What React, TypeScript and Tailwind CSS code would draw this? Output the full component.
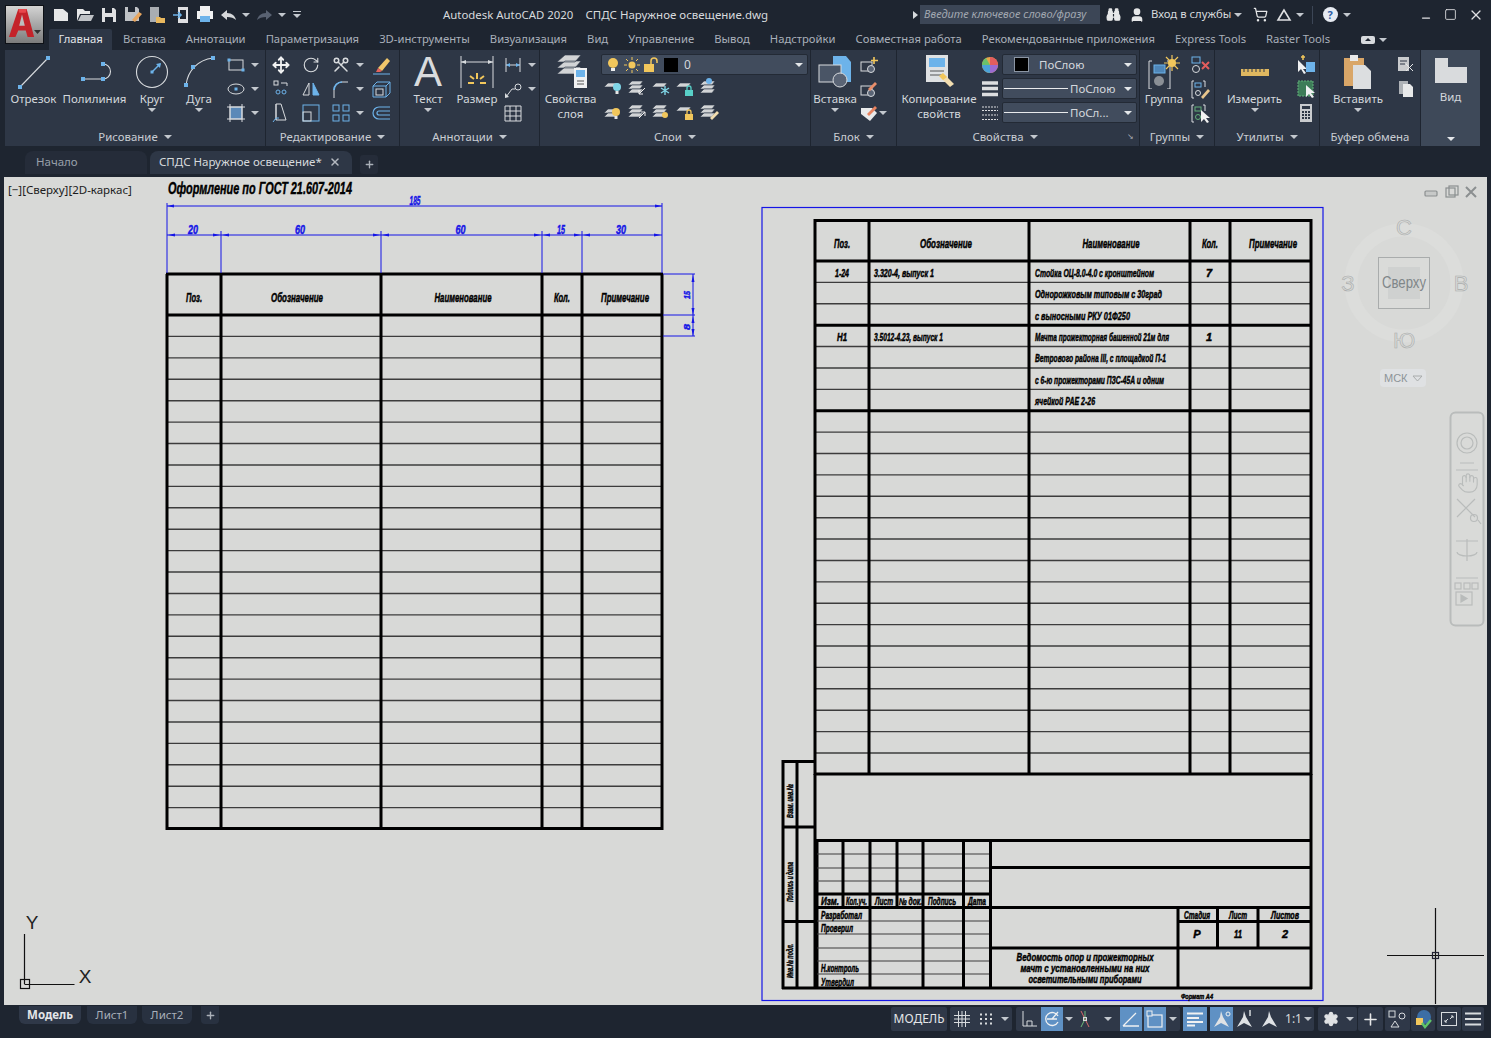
import type { ReactNode } from 'react'
import { Move, RotateCw, Scissors, ShoppingCart, Binoculars, User, Settings, Plus, X, Minus, Square, Hand } from 'lucide-react'

const L = '#d8dbde'
const B = '#6db3ea'
const Y = '#f2c75c'
const G = '#63b07a'
const CAD = '#1515e6'

function Ic({ w = 22, h = 22, children }: { w?: number; h?: number; children: ReactNode }) {
  return (
    <svg width={w} height={h} viewBox={`0 0 ${w} ${h}`} fill="none" className="block shrink-0">
      {children}
    </svg>
  )
}

function Caret({ light }: { light?: boolean }) {
  return (
    <svg width="8" height="4" viewBox="0 0 8 4" className="block shrink-0">
      <path d="M0 0h8L4 4z" fill={light ? '#e4e7ea' : '#c3c8ce'} />
    </svg>
  )
}

function Dot({ x, y, s = 4, c = B }: { x: number; y: number; s?: number; c?: string }) {
  return <rect x={x - s / 2} y={y - s / 2} width={s} height={s} fill={c} />
}

function Big({
  cls,
  icon,
  label,
  label2,
  caret,
}: {
  cls: string
  icon: ReactNode
  label: string
  label2?: string
  caret?: boolean
}) {
  return (
    <div className={`flex shrink-0 flex-col items-center ${cls}`}>
      <div className="flex h-[38px] items-center justify-center">{icon}</div>
      <div className="whitespace-nowrap text-center text-[11.5px] leading-[15px] text-[#d3d7dc]">
        {label}
        {label2 ? <div>{label2}</div> : null}
      </div>
      {caret ? (
        <div className="mt-[2px]">
          <Caret />
        </div>
      ) : null}
    </div>
  )
}

function Cell({ box = 'w-[30px]', icon, caret }: { box?: string; icon: ReactNode; caret?: boolean }) {
  return (
    <div className="flex h-[24px] items-center">
      <div className={`flex shrink-0 items-center justify-center ${box}`}>{icon}</div>
      {caret ? <Caret /> : null}
    </div>
  )
}

function Panel({
  cls,
  title,
  children,
  launcher,
  noCaret,
}: {
  cls: string
  title: string
  children: ReactNode
  launcher?: boolean
  noCaret?: boolean
}) {
  return (
    <div className={`flex shrink-0 flex-col border-r border-[#1e2530] bg-[#2e3746] ${cls}`}>
      <div className="flex h-[77px] pt-[3px]">{children}</div>
      <div
        className={`relative flex h-[19px] items-center justify-center gap-[6px] text-[11.4px] text-[#c9cdd3] ${launcher ? 'pr-[26px]' : ''}`}
      >
        {title}
        {noCaret ? null : <Caret />}
        {launcher ? (
          <span className="absolute right-[5px] top-[5px] text-[8px] leading-none text-[#aab0b8]">↘</span>
        ) : null}
      </div>
    </div>
  )
}

function Stack({ n = 3, children }: { n?: number; children?: ReactNode }) {
  const ys = n === 3 ? [5, 9, 13] : n === 2 ? [9, 13] : [7]
  return (
    <Ic>
      {ys.map((y) => (
        <path key={y} d={`M6 ${y}h11l-3 4H2z`} fill="#d2d4d6" stroke="#2e3746" strokeWidth="0.6" />
      ))}
      {children}
    </Ic>
  )
}

const bulb = (c: string, x = 14, y = 12) => (
  <g>
    <circle cx={x} cy={y} r="4" fill={c} />
    <rect x={x - 1.5} y={y + 4} width="3" height="3" fill="#e6e6e6" />
  </g>
)

const lock = (c: string, x = 11, y = 11) => (
  <g>
    <rect x={x} y={y + 3} width="8" height="6" fill={c} />
    <path d={`M${x + 2} ${y + 3}v-2a2 2 0 0 1 4 0v2`} stroke={c} strokeWidth="1.3" />
  </g>
)

function Dropdown({ children }: { children: ReactNode }) {
  return (
    <div className="flex h-[21px] w-[135px] items-center rounded-[2px] border border-[#232a35] bg-[#414c5d] pr-[4px] text-[11.5px] text-[#d3d7dc]">
      {children}
      <div className="ml-auto">
        <Caret light />
      </div>
    </div>
  )
}

function Ribbon() {
  return (
    <div className="flex h-[96px] bg-[#1e2530] pl-[5px]">
      <Panel cls="w-[261px]" title="Рисование">
        <Big
          cls="w-[57px]"
          label="Отрезок"
          icon={
            <Ic w={34} h={34}>
              <path d="M3 32L31 3" stroke={L} strokeWidth="1.1" />
              <Dot x={3} y={32} />
              <Dot x={31} y={3} />
            </Ic>
          }
        />
        <Big
          cls="w-[65px]"
          label="Полилиния"
          icon={
            <Ic w={36} h={30}>
              <path d="M6 22h20a7.5 7.5 0 0 0 0-15" stroke={L} strokeWidth="1.1" />
              <Dot x={6} y={22} />
              <Dot x={26} y={22} />
              <Dot x={26} y={7} />
            </Ic>
          }
        />
        <Big
          cls="w-[50px]"
          label="Круг"
          caret
          icon={
            <Ic w={34} h={34}>
              <circle cx="17" cy="17" r="15.5" stroke={L} strokeWidth="1.1" />
              <path d="M17 17l8-8" stroke={B} strokeWidth="1.4" />
              <path d="M26 8l-5 1 4 4z" fill={B} />
              <Dot x={17} y={17} s={3} />
            </Ic>
          }
        />
        <Big
          cls="w-[44px]"
          label="Дуга"
          caret
          icon={
            <Ic w={32} h={34}>
              <path d="M3 30C5 15 15 5 30 3" stroke={L} strokeWidth="1.1" />
              <Dot x={3} y={30} />
              <Dot x={10} y={12} />
              <Dot x={30} y={3} />
            </Ic>
          }
        />
        <div className="flex flex-col">
          <Cell
            caret
            icon={
              <Ic>
                <rect x="4" y="6" width="14" height="10" stroke={L} />
                <Dot x={4} y={6} s={3} />
                <Dot x={18} y={16} s={3} />
              </Ic>
            }
          />
          <Cell
            caret
            icon={
              <Ic>
                <ellipse cx="11" cy="11" rx="8" ry="5" stroke={L} />
                <Dot x={11} y={11} s={3} />
              </Ic>
            }
          />
          <Cell
            caret
            icon={
              <Ic>
                <rect x="5" y="5" width="12" height="12" fill="#5b89b8" stroke={L} />
                <path d="M2 5h18M2 17h18M5 2v18M17 2v18" stroke={L} />
              </Ic>
            }
          />
        </div>
      </Panel>

      <Panel cls="w-[134px]" title="Редактирование">
        <div className="flex flex-col">
          <Cell icon={<Move size={18} color="#f0f1f2" strokeWidth={2.4} />} />
          <Cell
            icon={
              <Ic>
                <circle cx="8" cy="14" r="2" stroke={B} />
                <circle cx="14" cy="14" r="2" stroke={B} />
                <rect x="4" y="3" width="4" height="4" stroke={L} />
                <path d="M11 5h6v3" stroke={L} />
              </Ic>
            }
          />
          <Cell
            icon={
              <Ic>
                <path d="M6 2h5l5 16H6zM6 2v16" stroke={L} fill="none" />
                <path d="M3 20l3-4h3" stroke={B} />
              </Ic>
            }
          />
        </div>
        <div className="flex flex-col">
          <Cell icon={<RotateCw size={18} color={L} strokeWidth={1.5} />} />
          <Cell
            icon={
              <Ic>
                <path d="M9 5v12H3z" stroke={L} />
                <path d="M13 5v12h6z" fill={B} stroke={B} />
              </Ic>
            }
          />
          <Cell
            icon={
              <Ic>
                <rect x="3" y="3" width="16" height="16" stroke={B} />
                <rect x="3" y="10" width="8" height="9" stroke={L} />
              </Ic>
            }
          />
        </div>
        <div className="flex w-[40px] flex-col">
          <Cell caret icon={<Scissors size={18} color={L} className="rotate-90" />} />
          <Cell
            caret
            icon={
              <Ic>
                <path d="M4 20v-8a8 8 0 0 1 8-8h6" stroke={L} />
                <path d="M4 12a8 8 0 0 1 8-8" stroke={B} strokeWidth="1.6" />
              </Ic>
            }
          />
          <Cell
            caret
            icon={
              <Ic>
                <rect x="3" y="3" width="6" height="6" stroke={B} />
                <rect x="13" y="3" width="6" height="6" stroke={B} />
                <rect x="3" y="13" width="6" height="6" stroke={B} />
                <rect x="13" y="13" width="6" height="6" stroke={B} />
              </Ic>
            }
          />
        </div>
        <div className="flex flex-col">
          <Cell
            icon={
              <Ic>
                <path d="M8 14L17 4l3 3-8 10z" fill="#f0c76b" />
                <path d="M8 14l4 3-2 1H6z" fill="#e4635c" />
                <path d="M3 20h17" stroke={B} />
              </Ic>
            }
          />
          <Cell
            icon={
              <Ic>
                <path d="M3 8h13v11H3zM3 8l4-4h13v11l-4 4M16 8l4-4" stroke={B} />
                <rect x="6" y="11" width="7" height="6" stroke={L} />
              </Ic>
            }
          />
          <Cell
            icon={
              <Ic>
                <path d="M20 5H9a6 6 0 0 0 0 12h11M20 9H9a2 2 0 0 0 0 4h11" stroke={B} strokeWidth="1.2" />
              </Ic>
            }
          />
        </div>
      </Panel>

      <Panel cls="w-[140px]" title="Аннотации">
        <Big
          cls="w-[56px]"
          label="Текст"
          caret
          icon={<div className="h-[36px] font-['Liberation_Sans',sans-serif] text-[42px] leading-[36px] text-[#d9dbdd]">A</div>}
        />
        <Big
          cls="w-[42px]"
          label="Размер"
          icon={
            <Ic w={34} h={34}>
              <path d="M1 1v32M33 1v32M1 7h32" stroke={L} />
              <path d="M1 7l5-2v4zM33 7l-5-2v4z" fill={L} />
              <path d="M17 18v6M10 21l4 3M24 21l-4 3M8 28h6M20 28h6" stroke={Y} strokeWidth="2" />
            </Ic>
          }
        />
        <div className="flex flex-col">
          <Cell
            caret
            icon={
              <Ic>
                <path d="M4 4v14M18 4v14M4 11h14" stroke={L} />
                <path d="M4 11l4-2v4zM18 11l-4-2v4z" fill={B} />
              </Ic>
            }
          />
          <Cell
            caret
            icon={
              <Ic>
                <path d="M4 19l6-8h3" stroke={L} />
                <circle cx="16" cy="9" r="3" stroke={L} />
                <path d="M3 20v-5l4 4z" fill={L} />
              </Ic>
            }
          />
          <Cell
            icon={
              <Ic>
                <path d="M3 4h16v15H3zM3 9h16M3 14h16M8 4v15M14 4v15" stroke={L} />
              </Ic>
            }
          />
        </div>
      </Panel>

      <Panel cls="w-[271px]" title="Слои">
        <Big
          cls="w-[61px]"
          label="Свойства"
          label2="слоя"
          icon={
            <Ic w={36} h={36}>
              <path d="M12 1h16l-6 7H4zM12 7h16l-6 7H4zM12 13h16l-6 7H4z" fill="#d2d4d6" stroke="#2e3746" strokeWidth="0.6" />
              <rect x="21" y="14" width="13" height="20" fill="#f0f1f2" />
              <rect x="23" y="16" width="9" height="7" fill={B} />
              <path d="M24 27h7M24 30h7" stroke="#555" />
            </Ic>
          }
        />
        <div className="flex flex-col">
          <div className="mt-[1px] flex h-[21px] w-[207px] items-center rounded-[2px] border border-[#232a35] bg-[#414c5d] pr-[2px] text-[12px] text-[#d3d7dc]">
            <div className="ml-[1px] flex w-[19px] justify-center">
              <Ic w={14} h={16}>
                <circle cx="7" cy="6" r="5" fill={Y} />
                <rect x="5" y="11" width="4" height="3" fill="#eee" />
              </Ic>
            </div>
            <div className="flex w-[19px] justify-center">
              <Ic w={16} h={16}>
                <circle cx="8" cy="8" r="3.5" fill={Y} />
                <path d="M8 0v3M8 13v3M0 8h3M13 8h3M2 2l2 2M12 12l2 2M2 14l2-2M12 4l2-2" stroke={Y} />
              </Ic>
            </div>
            <div className="flex w-[19px] justify-center">
              <Ic w={16} h={16}>
                <rect x="1" y="7" width="10" height="8" fill={Y} />
                <path d="M8 7V4a3 3 0 0 1 6 0v2" stroke={Y} strokeWidth="1.5" />
              </Ic>
            </div>
            <div className="ml-[4px] h-[14px] w-[14px] bg-black" />
            <span className="ml-[6px]">0</span>
            <div className="ml-auto mr-[2px]">
              <Caret light />
            </div>
          </div>
          <div className="flex h-[24px] items-center">
            <div className="flex w-[24px] justify-center">
              <Stack n={1}>{bulb('#7fd5e6', 15, 11)}</Stack>
            </div>
            <div className="flex w-[24px] justify-center">
              <Stack>
                <path d="M19 12l-6 6M13 14v4h4" stroke="#eee" />
              </Stack>
            </div>
            <div className="flex w-[24px] justify-center">
              <Stack n={1}>
                <path d="M15 10v9M11 12l8 5M19 12l-8 5" stroke="#7fd5e6" strokeWidth="1.4" />
              </Stack>
            </div>
            <div className="flex w-[24px] justify-center">
              <Stack n={1}>{lock('#58d0c8')}</Stack>
            </div>
            <div className="flex w-[24px] justify-center">
              <Stack>
                <circle cx="11" cy="5" r="3" fill={B} />
              </Stack>
            </div>
          </div>
          <div className="flex h-[24px] items-center">
            <div className="flex w-[24px] justify-center">
              <Stack n={2}>{bulb(Y)}</Stack>
            </div>
            <div className="flex w-[24px] justify-center">
              <Stack>
                <path d="M13 18l6-6M15 12h4v4" stroke="#eee" />
              </Stack>
            </div>
            <div className="flex w-[24px] justify-center">
              <Stack>
                <circle cx="15" cy="15" r="3" fill={Y} />
              </Stack>
            </div>
            <div className="flex w-[24px] justify-center">
              <Stack n={1}>{lock(Y)}</Stack>
            </div>
            <div className="flex w-[24px] justify-center">
              <Stack>
                <path d="M12 18l7-7 2 2-7 7z" fill="#f2ddb0" />
              </Stack>
            </div>
          </div>
        </div>
      </Panel>

      <Panel cls="w-[86px]" title="Блок">
        <Big
          cls="w-[48px]"
          label="Вставка"
          caret
          icon={
            <Ic w={34} h={34}>
              <path d="M15 1h13l5 6v20H15z" fill={B} />
              <rect x="1" y="10" width="22" height="17" fill="#4a5566" stroke={L} />
              <circle cx="22" cy="25" r="7" fill="#5a6475" stroke={L} />
            </Ic>
          }
        />
        <div className="flex flex-col">
          <Cell
            box="w-[20px]"
            icon={
              <Ic w={20} h={20}>
                <rect x="2" y="7" width="11" height="9" stroke={L} />
                <circle cx="12" cy="14" r="3.5" stroke={L} fill="#5a6475" />
                <path d="M15 2v7M12 5.500h7" stroke={Y} strokeWidth="1.6" />
              </Ic>
            }
          />
          <Cell
            box="w-[20px]"
            icon={
              <Ic w={20} h={20}>
                <rect x="2" y="7" width="11" height="9" stroke={L} />
                <circle cx="12" cy="14" r="3.5" stroke={L} fill="#5a6475" />
                <path d="M9 10l7-7 2 2-7 7z" fill="#e88d6a" />
              </Ic>
            }
          />
          <Cell
            box="w-[20px]"
            caret
            icon={
              <Ic w={20} h={20}>
                <path d="M2 5h11l5 5-7 8-9-7z" fill="#e8e9ea" />
                <path d="M8 11l8-8 2 2-8 8z" fill="#e8825f" />
              </Ic>
            }
          />
        </div>
      </Panel>

      <Panel cls="w-[243px]" title="Свойства" launcher>
        <Big
          cls="w-[84px]"
          label="Копирование"
          label2="свойств"
          icon={
            <Ic w={36} h={36}>
              <rect x="5" y="1" width="22" height="27" fill="#dfe1e3" />
              <rect x="8" y="4" width="16" height="9" fill={B} />
              <path d="M9 17h14M9 21h14" stroke="#555" />
              <path d="M20 24l9 9 4-3-9-9z" fill="#f2ddb0" />
              <path d="M18 22l4-3 4 4-4 3z" fill={Y} />
            </Ic>
          }
        />
        <div className="flex w-[21px] flex-col">
          <Cell
            box="w-[18px]"
            icon={
              <svg width="18" height="18" viewBox="0 0 18 18">
                <circle cx="9" cy="9" r="8" fill="#e6a54a" />
                <path d="M9 9V1a8 8 0 0 1 8 8z" fill="#e35d5d" />
                <path d="M9 9h8a8 8 0 0 1-8 8z" fill="#9b6bd1" />
                <path d="M9 9v8a8 8 0 0 1-8-8z" fill="#4ba3d9" />
                <path d="M9 9H1a8 8 0 0 1 4-7z" fill="#6ac26b" />
              </svg>
            }
          />
          <Cell
            box="w-[18px]"
            icon={
              <Ic w={16} h={18}>
                <path d="M0 3h16M0 8.500h16M0 14.500h16" stroke="#dcdee0" strokeWidth="3.4" />
              </Ic>
            }
          />
          <Cell
            box="w-[18px]"
            icon={
              <Ic w={16} h={18}>
                <path d="M0 3h16M0 6.500h16M0 11h16M0 15.500h16" stroke="#dcdee0" strokeWidth="1.2" strokeDasharray="2 1" />
              </Ic>
            }
          />
        </div>
        <div className="flex flex-col gap-[3px] pt-[1px]">
          <Dropdown>
            <div className="ml-[11px] h-[15px] w-[15px] border border-[#8b95a3] bg-black" />
            <span className="ml-[10px]">ПоСлою</span>
          </Dropdown>
          <Dropdown>
            <div className="ml-[1px] h-px w-[64px] bg-[#e8eaec]" />
            <span className="ml-[2px]">ПоСлою</span>
          </Dropdown>
          <Dropdown>
            <div className="ml-[1px] h-px w-[64px] bg-[#e8eaec]" />
            <span className="ml-[2px]">ПоСл...</span>
          </Dropdown>
        </div>
      </Panel>

      <Panel cls="w-[75px]" title="Группы">
        <Big
          cls="w-[48px]"
          label="Группа"
          icon={
            <Ic w={34} h={34}>
              <path d="M5 6H2v28h3M20 6h3v28h-3" stroke={L} />
              <rect x="7" y="10" width="11" height="8" fill="#4f86b8" stroke={B} />
              <circle cx="12" cy="26" r="5" fill="#8a8f96" />
              <circle cx="25" cy="8" r="4" fill={Y} />
              <path d="M25 0v16M17 8h16M19 2l12 12M19 14L31 2" stroke={Y} strokeWidth="1.2" />
            </Ic>
          }
        />
        <div className="flex flex-col">
          <Cell
            box="w-[24px]"
            icon={
              <Ic>
                <rect x="3" y="3" width="8" height="6" stroke={B} />
                <circle cx="7" cy="15" r="3.500" stroke={L} />
                <path d="M13 8l7 7M20 8l-7 7" stroke="#e35d5d" strokeWidth="2" />
              </Ic>
            }
          />
          <Cell
            box="w-[24px]"
            icon={
              <Ic>
                <path d="M5 3H3v17h2M14 3h2v6" stroke={L} />
                <rect x="6" y="5" width="6" height="4" stroke={B} />
                <circle cx="9" cy="15" r="2.500" stroke={L} />
                <path d="M12 19l7-8 2 2-7 8z" fill="#e8c58c" />
              </Ic>
            }
          />
          <Cell
            box="w-[24px]"
            icon={
              <Ic>
                <path d="M5 3H3v17h2M14 3h2v6" stroke={L} />
                <rect x="6" y="5" width="6" height="4" stroke={G} />
                <circle cx="9" cy="15" r="2.500" stroke={G} />
                <path d="M12 8v12l3-3 3 4 2-1-3-4h4z" fill="#f2f2f2" />
              </Ic>
            }
          />
        </div>
      </Panel>

      <Panel cls="w-[105px]" title="Утилиты">
        <Big
          cls="w-[79px]"
          label="Измерить"
          caret
          icon={
            <Ic w={30} h={10}>
              <rect x="1" y="2" width="28" height="7" fill="#e0b860" />
              <path d="M4 2v3M8 2v3M12 2v3M16 2v3M20 2v3M24 2v3" stroke="#2e3746" />
            </Ic>
          }
        />
        <div className="flex flex-col">
          <Cell
            box="w-[24px]"
            icon={
              <Ic>
                <path d="M3 6v12l3-3 3 5 2-1-3-4h4z" fill="#f0f1f2" />
                <rect x="11" y="8" width="9" height="10" fill={B} />
                <path d="M8 1v5M6 3h4" stroke={Y} strokeWidth="1.5" />
              </Ic>
            }
          />
          <Cell
            box="w-[24px]"
            icon={
              <Ic>
                <rect x="3" y="3" width="15" height="15" fill="#3d7c58" stroke={G} strokeDasharray="2 1" />
                <path d="M11 7v12l3-3 3 4 2-1-3-4h4z" fill="#f0f1f2" />
              </Ic>
            }
          />
          <Cell
            box="w-[24px]"
            icon={
              <Ic>
                <rect x="5" y="2" width="12" height="18" fill="#c9cbce" />
                <rect x="7" y="4" width="8" height="3" fill="#2e3746" />
                <path d="M7 10h2M10 10h2M13 10h2M7 13h2M10 13h2M13 13h2M7 16h2M10 16h2M13 16h2" stroke="#2e3746" strokeWidth="2" />
              </Ic>
            }
          />
        </div>
      </Panel>

      <Panel cls="w-[100px] border-r-0" title="Буфер обмена" noCaret>
        <Big
          cls="w-[76px]"
          label="Вставить"
          caret
          icon={
            <Ic w={30} h={36}>
              <rect x="1" y="4" width="20" height="28" fill="#d9a668" />
              <rect x="7" y="1" width="8" height="6" fill="#e8e9ea" />
              <path d="M10 11h12l6 6v18H10z" fill="#dcdee0" />
            </Ic>
          }
        />
        <div className="flex flex-col">
          <Cell
            box="w-[20px]"
            icon={
              <Ic w={18} h={18}>
                <rect x="1" y="1" width="11" height="14" fill="#c9cbce" />
                <path d="M3 5h7M3 8h5" stroke="#2e3746" />
                <path d="M9 8l7 7M16 8l-7 7" stroke="#e8e9ea" />
              </Ic>
            }
          />
          <Cell
            box="w-[20px]"
            icon={
              <Ic w={18} h={18}>
                <rect x="2" y="1" width="9" height="13" fill="#aeb2b7" />
                <path d="M6 4h7l3 3v10H6z" fill="#e8e9ea" />
              </Ic>
            }
          />
        </div>
      </Panel>

      <div className="ml-px flex w-[59px] flex-col items-center bg-[#3e4959]">
        <div className="mt-[8px]">
          <Ic w={32} h={25}>
            <path d="M0 0h13v9h19v16H0z" fill="#d9dbdd" />
          </Ic>
        </div>
        <div className="mt-[6px] text-[11.5px] leading-[15px] text-[#d3d7dc]">Вид</div>
        <div className="mt-auto mb-[5px]">
          <Caret light />
        </div>
      </div>
    </div>
  )
}

const RIBBON_TABS = [
  'Вставка',
  'Аннотации',
  'Параметризация',
  '3D-инструменты',
  'Визуализация',
  'Вид',
  'Управление',
  'Вывод',
  'Надстройки',
  'Совместная работа',
  'Рекомендованные приложения',
  'Express Tools',
  'Raster Tools',
]

function Header() {
  return (
    <div className="flex h-[50px] bg-[#1e2530]">
      <div className="w-[49px] shrink-0 pl-[5px] pt-[5px]">
        <div className="relative h-[39px] w-[39px] border border-[#0e1116] bg-gradient-to-b from-[#d4d4d4] to-[#7c7c7c]">
          <svg width="28" height="32" viewBox="0 0 30 34" className="ml-[2px] mt-[1px]">
            <path d="M11 2h9l8 30h-7l-2-7h-8l-3 7H1z" fill="#c4232a" />
            <path d="M15 8l-3 12h6z" fill="#bdbdbd" />
            <path d="M11 2h9l-1 4h-7z" fill="#e8474c" />
          </svg>
          <div className="absolute bottom-[9px] right-[2px]">
            <svg width="7" height="4" viewBox="0 0 7 4" className="block">
              <path d="M0 0h7L3.500 4z" fill="#333" />
            </svg>
          </div>
        </div>
      </div>
      <div className="flex min-w-0 flex-1 flex-col">
        <div className="flex h-[29px] items-center">
          <div className="flex items-center">
            <div className="flex w-[24px] justify-center">
              <Ic w={16} h={16}>
                <path d="M1 2h9l5 4v8H1z" fill="#e6e7e8" />
              </Ic>
            </div>
            <div className="flex w-[24px] justify-center">
              <Ic w={18} h={16}>
                <path d="M1 2h6l2 2h5v3H4l-3 7z" fill="#e6e7e8" />
                <path d="M5 8h13l-3 6H2z" fill="#bfc2c6" />
              </Ic>
            </div>
            <div className="flex w-[24px] justify-center">
              <Ic w={16} h={16}>
                <path d="M1 1h12l2 2v12H1z" fill="#dfe0e2" />
                <rect x="4" y="1" width="7" height="5" fill="#1e2530" />
                <rect x="4" y="10" width="8" height="5" fill="#1e2530" />
              </Ic>
            </div>
            <div className="flex w-[24px] justify-center">
              <Ic w={18} h={18}>
                <path d="M1 1h12l2 2v12H1z" fill="#bfc2c6" />
                <rect x="4" y="1" width="7" height="5" fill="#1e2530" />
                <path d="M8 14l7-8 3 2-7 8z" fill="#e8a65e" />
              </Ic>
            </div>
            <div className="flex w-[24px] justify-center">
              <Ic w={18} h={18}>
                <rect x="2" y="1" width="9" height="15" fill="#a9adb2" />
                <path d="M8 11h4l1 1h4v5H8z" fill="#e8b85e" />
              </Ic>
            </div>
            <div className="flex w-[24px] justify-center">
              <Ic w={18} h={18}>
                <rect x="6" y="1" width="10" height="16" fill="#dfe0e2" />
                <rect x="8" y="4" width="6" height="9" fill="#1e2530" />
                <path d="M1 9h8M6 6l3 3-3 3" stroke={B} strokeWidth="1.6" />
              </Ic>
            </div>
            <div className="flex w-[24px] justify-center">
              <Ic w={18} h={17}>
                <rect x="4" y="0" width="10" height="5" fill="#f0f1f2" />
                <rect x="1" y="5" width="16" height="8" fill="#f0f1f2" />
                <rect x="4" y="10" width="10" height="6" fill={B} />
              </Ic>
            </div>
            <div className="flex w-[24px] justify-center">
              <Ic w={18} h={12}>
                <path d="M7 1L1 6l6 5V8c4 0 7 1 9 3-1-4-4-7-9-7z" fill="#d6d8da" />
              </Ic>
            </div>
            <div className="flex w-[10px] justify-center">
              <Caret />
            </div>
            <div className="flex w-[26px] justify-center">
              <Ic w={18} h={12}>
                <path d="M11 1l6 5-6 5V8C7 8 4 9 2 11c1-4 4-7 9-7z" fill="#596272" />
              </Ic>
            </div>
            <div className="flex w-[10px] justify-center">
              <Caret />
            </div>
            <div className="flex w-[20px] flex-col items-center gap-[2px]">
              <div className="h-px w-[8px] bg-[#c3c8ce]" />
              <Caret />
            </div>
          </div>
          <span className="ml-[136px] whitespace-nowrap text-[11.4px] text-[#d7dadd]">Autodesk AutoCAD 2020</span>
          <span className="ml-[12px] whitespace-nowrap text-[11.5px] text-[#d7dadd]">СПДС Наружное освещение.dwg</span>
          <div className="ml-auto flex items-center">
            <div className="flex w-[10px] justify-center">
              <svg width="5" height="8" viewBox="0 0 5 8">
                <path d="M0 0l5 4-5 4z" fill="#d7dadd" />
              </svg>
            </div>
            <div className="flex h-[19px] w-[180px] items-center bg-[#3c4656] pl-[4px] text-[11px] italic text-[#a2a8b1]">
              Введите ключевое слово/фразу
            </div>
            <div className="ml-[2px] flex w-[22px] justify-center">
              <Binoculars size={15} color="#e6e7e8" fill="#e6e7e8" />
            </div>
            <div className="ml-[2px] flex w-[22px] justify-center">
              <User size={16} color="#e6e7e8" fill="#e6e7e8" />
            </div>
            <span className="ml-[3px] w-[81px] whitespace-nowrap text-[11.3px] text-[#d7dadd]">Вход в службы</span>
            <div className="flex w-[12px] justify-center">
              <Caret />
            </div>
            <div className="flex w-[32px] justify-center">
              <ShoppingCart size={15} color="#e6e7e8" />
            </div>
            <div className="flex w-[16px] justify-center">
              <Ic w={16} h={14}>
                <path d="M8 2L2 12h12z" stroke="#dfe0e2" strokeWidth="1.6" />
              </Ic>
            </div>
            <div className="flex w-[16px] justify-center">
              <Caret />
            </div>
            <div className="ml-[4px] h-[18px] w-px bg-[#3c4656]" />
            <div className="ml-[3px] flex w-[28px] justify-center">
              <div className="flex h-[15px] w-[15px] items-center justify-center rounded-full bg-[#e7ebf2] text-[11px] font-bold leading-none text-[#2d5fa8]">
                ?
              </div>
            </div>
            <div className="flex w-[6px] justify-center">
              <Caret />
            </div>
            <div className="ml-[63px] flex w-[25px] justify-center pt-[7px]">
              <Minus size={12} color="#dfe0e2" strokeWidth={2.5} />
            </div>
            <div className="flex w-[25px] justify-center">
              <Square size={13} color="#dfe0e2" strokeWidth={1.6} />
            </div>
            <div className="mr-[3px] flex w-[25px] justify-center">
              <X size={16} color="#dfe0e2" strokeWidth={1.8} />
            </div>
          </div>
        </div>
        <div className="flex h-[21px] items-center text-[11.25px] text-[#a9b0ba]">
          <div className="flex h-full w-[63px] items-center justify-center rounded-t-[2px] bg-[#2e3746] text-[#e4e6e9]">
            Главная
          </div>
          <div className="ml-[11px] flex items-center gap-[20px] whitespace-nowrap">
            {RIBBON_TABS.map((t) => (
              <span key={t}>{t}</span>
            ))}
          </div>
          <div className="ml-[31px] flex items-center gap-[4px]">
            <Ic w={14} h={8}>
              <rect x="0" y="0" width="14" height="8" rx="2" fill="#d7dadd" />
              <path d="M4 5l3-3 3 3z" fill="#1e2530" />
            </Ic>
            <Caret />
          </div>
        </div>
      </div>
    </div>
  )
}

function DocTabs() {
  return (
    <div className="flex h-[31px] items-end bg-[#1e2530] pb-[3px] pl-[25px] text-[11.5px]">
      <div className="flex h-[23px] w-[122px] items-center rounded-t-[8px] bg-[#252c39] pb-[1px] pl-[11px] text-[#98a0aa]">Начало</div>
      <div className="ml-[3px] flex h-[23px] w-[202px] items-center rounded-t-[8px] bg-[#2e3746] pb-[1px] pl-[9px] text-[#d7dadd]">
        СПДС Наружное освещение*
        <X size={12} color="#b4b9c0" strokeWidth={3} className="ml-[7px]" />
      </div>
      <div className="ml-[8px] flex h-[19px] w-[18px] items-center justify-center rounded-[3px] bg-[#252c39]">
        <Plus size={11} color="#aab0b8" strokeWidth={3} />
      </div>
    </div>
  )
}

function T({
  x,
  y,
  w,
  s = 11,
  a = 'start',
  fill = '#000',
  rot,
  children,
}: {
  x: number
  y: number
  w?: number
  s?: number
  a?: 'start' | 'middle'
  fill?: string
  rot?: number
  children: string
}) {
  return (
    <text
      x={x}
      y={y}
      fontSize={s}
      textAnchor={a}
      fill={fill}
      stroke={fill}
      strokeWidth="0.45"
      textLength={w}
      lengthAdjust="spacingAndGlyphs"
      transform={rot !== undefined ? `rotate(${rot} ${x} ${y})` : undefined}
    >
      {children}
    </text>
  )
}

function HeadRow({ cs, y }: { cs: number[]; y: number }) {
  const names: [string, number][] = [
    ['Поз.', 16],
    ['Обозначение', 52],
    ['Наименование', 57],
    ['Кол.', 16],
    ['Примечание', 48],
  ]
  return (
    <g>
      {names.map(([n, w], i) => (
        <T key={n} x={cs[i]} y={y} w={w} s={12} a="middle">
          {n}
        </T>
      ))}
    </g>
  )
}

function Arrow({ x, y, dir }: { x: number; y: number; dir: 'l' | 'r' | 'u' | 'd' }) {
  const d = {
    l: `M${x} ${y}l7-1.5v3z`,
    r: `M${x} ${y}l-7-1.5v3z`,
    u: `M${x} ${y}l-1.5 7h3z`,
    d: `M${x} ${y}l-1.5-7h3z`,
  }[dir]
  return <path d={d} fill={CAD} />
}

function Line({ x1, y1, x2, y2, w = 3, c = '#000' }: { x1: number; y1: number; x2: number; y2: number; w?: number; c?: string }) {
  return <line x1={x1} y1={y1} x2={x2} y2={y2} stroke={c} strokeWidth={w} />
}

function LeftTable() {
  const xs = [167, 221, 381, 542, 582, 662]
  const rows = Array.from({ length: 24 }, (_, i) => 315 + i * 21.42)
  const dims: [number, number, string][] = [
    [167, 221, '20'],
    [221, 381, '60'],
    [381, 542, '60'],
    [542, 582, '15'],
    [582, 662, '30'],
  ]
  return (
    <g>
      <T x={168} y={194} w={184} s={17}>
        Оформление по ГОСТ 21.607-2014
      </T>
      {rows.slice(1).map((y) => (
        <Line key={y} x1={167} y1={y} x2={662} y2={y} w={1.4} c="#3c3c3c" />
      ))}
      <Line x1={166} y1={274} x2={663} y2={274} />
      <Line x1={166} y1={315} x2={663} y2={315} />
      <Line x1={166} y1={828.500} x2={663} y2={828.500} />
      {xs.map((x) => (
        <Line key={x} x1={x} y1={274} x2={x} y2={830} />
      ))}
      <HeadRow cs={[194, 297, 463, 562, 625]} y={302} />

      <Line x1={167} y1={206} x2={662} y2={206} w={1} c={CAD} />
      <Arrow x={167} y={206} dir="l" />
      <Arrow x={662} y={206} dir="r" />
      <T x={415} y={205} w={11} s={12} a="middle" fill={CAD}>
        185
      </T>
      <Line x1={167} y1={203} x2={167} y2={273} w={1} c={CAD} />
      <Line x1={662} y1={203} x2={662} y2={273} w={1} c={CAD} />
      {xs.slice(1, 5).map((x) => (
        <Line key={x} x1={x} y1={231} x2={x} y2={273} w={1} c={CAD} />
      ))}
      <Line x1={167} y1={235} x2={662} y2={235} w={1} c={CAD} />
      {dims.map(([a, b, n]) => (
        <g key={a}>
          <Arrow x={a + 1} y={235} dir="l" />
          <Arrow x={b - 1} y={235} dir="r" />
          <T x={(a + b) / 2 - 1} y={234} w={n === '15' ? 8 : 10} s={12} a="middle" fill={CAD}>
            {n}
          </T>
        </g>
      ))}
      <Line x1={663} y1={274} x2={695} y2={274} w={1} c={CAD} />
      <Line x1={663} y1={315} x2={695} y2={315} w={1} c={CAD} />
      <Line x1={663} y1={336} x2={695} y2={336} w={1} c={CAD} />
      <Line x1={693} y1={274} x2={693} y2={336} w={1} c={CAD} />
      <Arrow x={693} y={275} dir="u" />
      <Arrow x={693} y={315} dir="d" />
      <Arrow x={693} y={316} dir="u" />
      <Arrow x={693} y={336} dir="d" />
      <T x={690} y={299} w={8} s={9} rot={-90} fill={CAD}>
        15
      </T>
      <T x={690} y={330} w={6} s={9} rot={-90} fill={CAD}>
        8
      </T>
    </g>
  )
}

function RightTable() {
  const xs = [815, 869, 1029, 1190, 1230, 1311]
  const rows = Array.from({ length: 24 }, (_, i) => 261 + i * 21.39)
  const thin = rows.slice(1).filter((_, i) => i !== 2 && i !== 6)
  const cols: [number, number][] = [
    [843, 907],
    [870, 988],
    [897, 907],
    [923, 988],
    [963.500, 988],
    [990.500, 988],
  ]
  const texts: [number, number, string][] = [
    [277, 119, 'Стойка ОЦ-8.0-4.0 с кронштейном'],
    [298, 127, 'Однорожковым типовым с 30град'],
    [320, 95, 'с выносными РКУ 01Ф250'],
    [341, 134, 'Мачта прожекторная башенной 21м для'],
    [362, 131, 'Ветрового района III, с площадкой П-1'],
    [384, 129, 'с 6-ю прожекторами ПЗС-45А и одним'],
    [405, 60, 'ячейкой РАЕ 2-26'],
  ]
  const stamp: [number, number, number, string][] = [
    [821, 905, 18, 'Изм.'],
    [846, 905, 21, 'Кол.уч.'],
    [875, 905, 18, 'Лист'],
    [899, 905, 23, '№ док.'],
    [928, 905, 28, 'Подпись'],
    [968, 905, 18, 'Дата'],
    [821, 919, 41, 'Разработал'],
    [821, 932, 32, 'Проверил'],
    [821, 972, 38, 'Н.контроль'],
    [821, 986, 33, 'Утвердил'],
  ]
  return (
    <g>
      <rect x="762" y="207.500" width="561" height="793" fill="none" stroke={CAD} strokeWidth="1.2" />
      {thin.map((y) => (
        <Line key={y} x1={815} y1={y} x2={1311} y2={y} w={1.4} c="#3c3c3c" />
      ))}
      {[220.500, 261, 325.200, 410.700, 774].map((y) => (
        <Line key={y} x1={814} y1={y} x2={1312} y2={y} />
      ))}
      {xs.map((x) => (
        <Line key={x} x1={x} y1={219} x2={x} y2={775} />
      ))}
      <HeadRow cs={[842, 946, 1111, 1210, 1273]} y={248} />
      <T x={842} y={277} w={14} a="middle">
        1-24
      </T>
      <T x={874} y={277} w={60}>
        3.320-4, выпуск 1
      </T>
      <T x={1209} y={277} a="middle">
        7
      </T>
      <T x={842} y={341} w={10} a="middle">
        Н1
      </T>
      <T x={874} y={341} w={69}>
        3.5012-4.23, выпуск 1
      </T>
      <T x={1209} y={341} a="middle">
        1
      </T>
      {texts.map(([y, w, s]) => (
        <T key={y} x={1035} y={y} w={w}>
          {s}
        </T>
      ))}

      <Line x1={1311} y1={774} x2={1311} y2={989} />
      <Line x1={815} y1={774} x2={815} y2={989} />
      <Line x1={815} y1={840.500} x2={1312} y2={840.500} />
      <Line x1={782} y1={761.500} x2={815} y2={761.500} />
      <Line x1={782} y1={827} x2={815} y2={827} />
      <Line x1={782} y1={921.500} x2={815} y2={921.500} />
      <Line x1={782} y1={988} x2={1312} y2={988} />
      <Line x1={783} y1={760} x2={783} y2={989} />
      <Line x1={797} y1={760} x2={797} y2={989} />
      <Line x1={817} y1={840} x2={817} y2={989} />
      {[854, 868, 881, 921, 934, 948, 961, 974].map((y) => (
        <Line key={y} x1={817} y1={y} x2={990} y2={y} w={1.2} c="#3c3c3c" />
      ))}
      <Line x1={817} y1={894} x2={990} y2={894} />
      <Line x1={817} y1={907.500} x2={1311} y2={907.500} />
      {cols.map(([x, y]) => (
        <Line key={x} x1={x} y1={840} x2={x} y2={y} />
      ))}
      <Line x1={990} y1={867.500} x2={1311} y2={867.500} />
      <Line x1={990} y1={948} x2={1311} y2={948} />
      <Line x1={1178} y1={907} x2={1178} y2={989} />
      <Line x1={1178} y1={921.500} x2={1311} y2={921.500} />
      <Line x1={1217.500} y1={907} x2={1217.500} y2={948} />
      <Line x1={1258} y1={907} x2={1258} y2={948} />
      {stamp.map(([x, y, w, s]) => (
        <T key={s} x={x} y={y} w={w} s={10}>
          {s}
        </T>
      ))}
      <T x={1197} y={919} w={26} s={10} a="middle">
        Стадия
      </T>
      <T x={1238} y={919} w={18} s={10} a="middle">
        Лист
      </T>
      <T x={1285} y={919} w={28} s={10} a="middle">
        Листов
      </T>
      <T x={1197} y={938} a="middle">
        Р
      </T>
      <T x={1238} y={938} w={8} a="middle">
        11
      </T>
      <T x={1285} y={938} a="middle">
        2
      </T>
      <T x={1085} y={961} w={137} a="middle">
        Ведомость опор и прожекторных
      </T>
      <T x={1085} y={972} w={129} a="middle">
        мачт с установленными на них
      </T>
      <T x={1085} y={983} w={113} a="middle">
        осветительными приборами
      </T>
      <T x={1197} y={999} w={32} s={8} a="middle">
        Формат А4
      </T>
      <T x={793} y={818} w={34} s={9} rot={-90}>
        Взам. инв.№
      </T>
      <T x={793} y={902} w={40} s={9} rot={-90}>
        Подпись и дата
      </T>
      <T x={793} y={978} w={34} s={9} rot={-90}>
        Инв.№ подл.
      </T>
    </g>
  )
}

function CanvasOverlays() {
  const soft = '#b9bcbb'
  return (
    <g>
      <g stroke="#111" strokeWidth="1.2" fill="none">
        <path d="M24.500 934v50M24.500 984.500h50" />
        <rect x="20.500" y="979.500" width="9" height="9" />
        <path d="M1387 955.500h97M1435.500 908v96" />
        <rect x="1432.500" y="952.500" width="6" height="6" stroke="#223" />
      </g>
      <text x="32" y="929" fontSize="19" textAnchor="middle" fill="#222">
        Y
      </text>
      <text x="85" y="983" fontSize="19" textAnchor="middle" fill="#222">
        X
      </text>

      <g stroke="#8b8f90" strokeWidth="1.2" fill="none">
        <rect x="1425" y="191" width="12" height="5" rx="1" fill="#c7c9c8" />
        <rect x="1446" y="188" width="9" height="9" />
        <rect x="1449" y="186" width="9" height="9" />
        <path d="M1466 187l10 10M1476 187l-10 10" strokeWidth="2" />
      </g>

      <circle cx="1404" cy="283" r="53" fill="none" stroke="#dcdddb" strokeWidth="13" />
      <rect x="1378.500" y="257.500" width="51" height="51" fill="#dadbd9" stroke="#a9acac" />
      <rect x="1388" y="267" width="32" height="32" fill="#cfd1d0" />
      <text x="1404" y="288" fontSize="16" textAnchor="middle" fill="#7f8689" textLength="44" lengthAdjust="spacingAndGlyphs">
        Сверху
      </text>
      <g fontSize="22" textAnchor="middle" fill="#d8d9d7" stroke="#a9acac" strokeWidth="0.6">
        <text x="1404" y="235">
          С
        </text>
        <text x="1348" y="291">
          З
        </text>
        <text x="1461" y="291">
          В
        </text>
        <text x="1404" y="348">
          Ю
        </text>
      </g>
      <rect x="1380" y="369" width="46" height="18" rx="4" fill="#dfe1e3" />
      <text x="1384" y="382" fontSize="11" fill="#8d9498">
        МСК
      </text>
      <path d="M1413 376h9l-4.500 5z" fill="none" stroke="#a9acac" />

      <rect x="1450.500" y="412.500" width="33" height="213" rx="5" fill="#d9dad8" stroke="#b9bcbb" strokeWidth="2" />
      <g stroke={soft} strokeWidth="1.2" fill="none">
        <circle cx="1467" cy="443" r="10" />
        <circle cx="1467" cy="443" r="6" />
        <path d="M1460 463h14M1456 470h22M1456 541h22M1456 578h22" />
        <path d="M1457 499l18 18M1475 499l-18 18M1478 520l3 4" />
        <circle cx="1474" cy="518" r="3.500" />
        <path d="M1467 539v22M1457 552a10 4 0 0 0 20 0" />
        <rect x="1455" y="583" width="6" height="6" />
        <rect x="1464" y="583" width="6" height="6" />
        <rect x="1472" y="583" width="6" height="6" />
        <rect x="1456" y="592" width="16" height="13" />
        <path d="M1461 595l6 3.500-6 3.500z" fill={soft} />
      </g>
      <foreignObject x="1457" y="472" width="22" height="22">
        <Hand size={22} color={soft} strokeWidth={1.2} />
      </foreignObject>
    </g>
  )
}

function Canvas() {
  return (
    <div className="relative mx-[4px] flex-1 bg-[#d8d9d7]">
      <svg
        viewBox="4 177 1483 828"
        className="absolute inset-0 h-full w-full font-['Liberation_Sans',sans-serif]"
      >
        <g className="font-bold italic">
          <LeftTable />
          <RightTable />
        </g>
        <CanvasOverlays />
      </svg>
      <div className="absolute left-[4px] top-[4px] text-[11.5px] text-[#1c1c1c]">[−][Сверху][2D-каркас]</div>
    </div>
  )
}

function Sq({ cls, on, children }: { cls: string; on?: boolean; children: ReactNode }) {
  return (
    <div className={`flex h-[24px] shrink-0 items-center justify-center ${cls} ${on ? 'bg-[#5f91c4]' : ''}`}>{children}</div>
  )
}

function SGroup({ children }: { children: ReactNode }) {
  return <div className="flex h-[24px] items-center rounded-[2px] bg-[#2f3848]">{children}</div>
}

function Anno({ x = 0 }: { x?: number }) {
  return <path d={`M${9 + x} 2l2 6 6 10-8-4-7 4 6-10z`} fill="#dfe2e5" />
}

function StatusBar() {
  return (
    <div className="flex h-[33px] bg-[#1e2530] pb-[6px] pt-[1px]">
      <div className="flex h-[18px] items-center pl-[19px] text-[11.5px]">
        <div className="flex h-full w-[62px] items-center justify-center rounded-b-[6px] bg-[#2f3848] pb-[1px] font-bold text-[#e4e6e9]">
          Модель
        </div>
        <div className="ml-[6px] flex h-full w-[50px] items-center justify-center rounded-b-[6px] bg-[#283140] pb-[1px] text-[#a9b0ba]">
          Лист1
        </div>
        <div className="ml-[5px] flex h-full w-[50px] items-center justify-center rounded-b-[6px] bg-[#283140] pb-[1px] text-[#a9b0ba]">
          Лист2
        </div>
        <div className="ml-[9px] flex h-full w-[18px] items-center justify-center rounded-b-[4px] bg-[#283140]">
          <Plus size={11} color="#aab0b8" strokeWidth={3} />
        </div>
      </div>
      <div className="ml-auto flex items-center gap-[1.5px] pr-[7px]">
        <div className="flex h-[24px] w-[56px] items-center justify-center rounded-[2px] bg-[#2f3848] text-[12px] text-[#e4e6e9]">
          МОДЕЛЬ
        </div>
        <div className="ml-[1.5px]">
          <SGroup>
            <Sq cls="w-[23px]">
              <Ic w={16} h={16}>
                <path d="M0 4.500h16M0 8h16M0 11.500h16M4.500 0v16M8 0v16M11.500 0v16" stroke={L} />
              </Ic>
            </Sq>
            <Sq cls="w-[25px]">
              <Ic w={14} h={14}>
                <path d="M1 2.500h12M1 7h12M1 11.500h12" stroke={L} strokeWidth="2" strokeDasharray="2 3" />
              </Ic>
            </Sq>
            <Sq cls="w-[14px]">
              <Caret />
            </Sq>
          </SGroup>
        </div>
        <div className="ml-[2.5px]">
          <SGroup>
            <Sq cls="w-[25px]">
              <Ic w={16} h={16}>
                <path d="M2 0v15h14M6 15v-5h5v5" stroke={L} />
              </Ic>
            </Sq>
            <Sq cls="w-[22px]" on>
              <Ic w={18} h={18}>
                <path d="M15 6a6.500 6.500 0 1 0 0 6M4 9h10M15 2L9 9" stroke="#f0f1f2" strokeWidth="1.3" />
              </Ic>
            </Sq>
            <Sq cls="w-[12px]">
              <Caret />
            </Sq>
            <Sq cls="w-[20px]">
              <Ic w={16} h={18}>
                <path d="M4 1l8 16" stroke="#d66a6a" />
                <path d="M8 1v8l-4 8" stroke="#6dbb7a" />
                <rect x="6.500" y="7.500" width="3" height="3" stroke={L} />
              </Ic>
            </Sq>
            <Sq cls="w-[25px]">
              <Caret />
            </Sq>
            <Sq cls="w-[22px]" on>
              <Ic w={18} h={16}>
                <path d="M1 15h16M1 15L14 2" stroke="#f0f1f2" strokeWidth="1.3" />
              </Ic>
            </Sq>
            <Sq cls="ml-[2px] w-[22px]" on>
              <Ic w={18} h={18}>
                <rect x="2" y="5" width="14" height="12" stroke="#f0f1f2" strokeWidth="1.2" />
                <rect x="1" y="1" width="5" height="5" fill="#5f91c4" stroke="#f0f1f2" />
              </Ic>
            </Sq>
            <Sq cls="w-[14px]">
              <Caret />
            </Sq>
          </SGroup>
        </div>
        <div className="ml-[1.5px]">
          <Sq cls="w-[24px]" on>
            <Ic w={18} h={16}>
              <path d="M1 2.500h16M1 7h12M1 11h16M1 14.500h8" stroke="#f0f1f2" strokeWidth="2" />
            </Ic>
          </Sq>
        </div>
        <div className="ml-[1.5px]">
          <SGroup>
            <Sq cls="w-[23px]" on>
              <Ic w={20} h={20}>
                <Anno />
                <circle cx="16" cy="5" r="2" stroke="#f0f1f2" />
              </Ic>
            </Sq>
            <Sq cls="w-[24px]">
              <Ic w={20} h={20}>
                <Anno />
                <path d="M15 1v6" stroke={L} strokeWidth="1.5" />
              </Ic>
            </Sq>
            <Sq cls="w-[26px]">
              <Ic w={20} h={20}>
                <Anno />
              </Ic>
            </Sq>
            <Sq cls="w-[31px] gap-[2px] text-[12px] text-[#d7dadd]">
              1:1
              <Caret />
            </Sq>
          </SGroup>
        </div>
        <div className="ml-[2px]">
          <SGroup>
            <Sq cls="w-[26px]">
              <Settings size={16} color="#e0e2e4" fill="#e0e2e4" />
            </Sq>
            <Sq cls="w-[13px]">
              <Caret />
            </Sq>
          </SGroup>
        </div>
        <SGroup>
          <Sq cls="w-[25px]">
            <Plus size={19} color="#e6e7e8" strokeWidth={2} />
          </Sq>
        </SGroup>
        <SGroup>
          <Sq cls="w-[25px]">
            <Ic w={18} h={18}>
              <rect x="1" y="1" width="6" height="6" stroke={L} />
              <circle cx="14" cy="6" r="3" stroke={L} />
              <path d="M7 11l-4 6h8z" stroke={L} />
            </Ic>
          </Sq>
        </SGroup>
        <SGroup>
          <Sq cls="w-[24px]">
            <Ic w={20} h={20}>
              <circle cx="11" cy="8" r="7" fill="#3c6ea5" />
              <rect x="3" y="9" width="7" height="7" fill={Y} />
              <path d="M9 14l3 4 6-7" stroke="#5ec46a" strokeWidth="2.4" />
            </Ic>
          </Sq>
        </SGroup>
        <SGroup>
          <Sq cls="w-[24px]">
            <Ic w={16} h={14}>
              <rect x="0.500" y="0.500" width="15" height="13" stroke={L} />
              <path d="M4 10l3-3M9 7l3-3M10 4h2v2M4 8v2h2" stroke={L} />
            </Ic>
          </Sq>
        </SGroup>
        <SGroup>
          <Sq cls="w-[22px]">
            <Ic w={16} h={14}>
              <path d="M0 1.500h16M0 7h16M0 12.500h16" stroke={L} strokeWidth="1.800" />
            </Ic>
          </Sq>
        </SGroup>
      </div>
    </div>
  )
}

export default function App() {
  return (
    <div className="flex h-[1038px] w-[1491px] flex-col overflow-hidden bg-[#1e2530] font-['Noto_Sans',sans-serif]">
      <Header />
      <Ribbon />
      <DocTabs />
      <Canvas />
      <StatusBar />
    </div>
  )
}
